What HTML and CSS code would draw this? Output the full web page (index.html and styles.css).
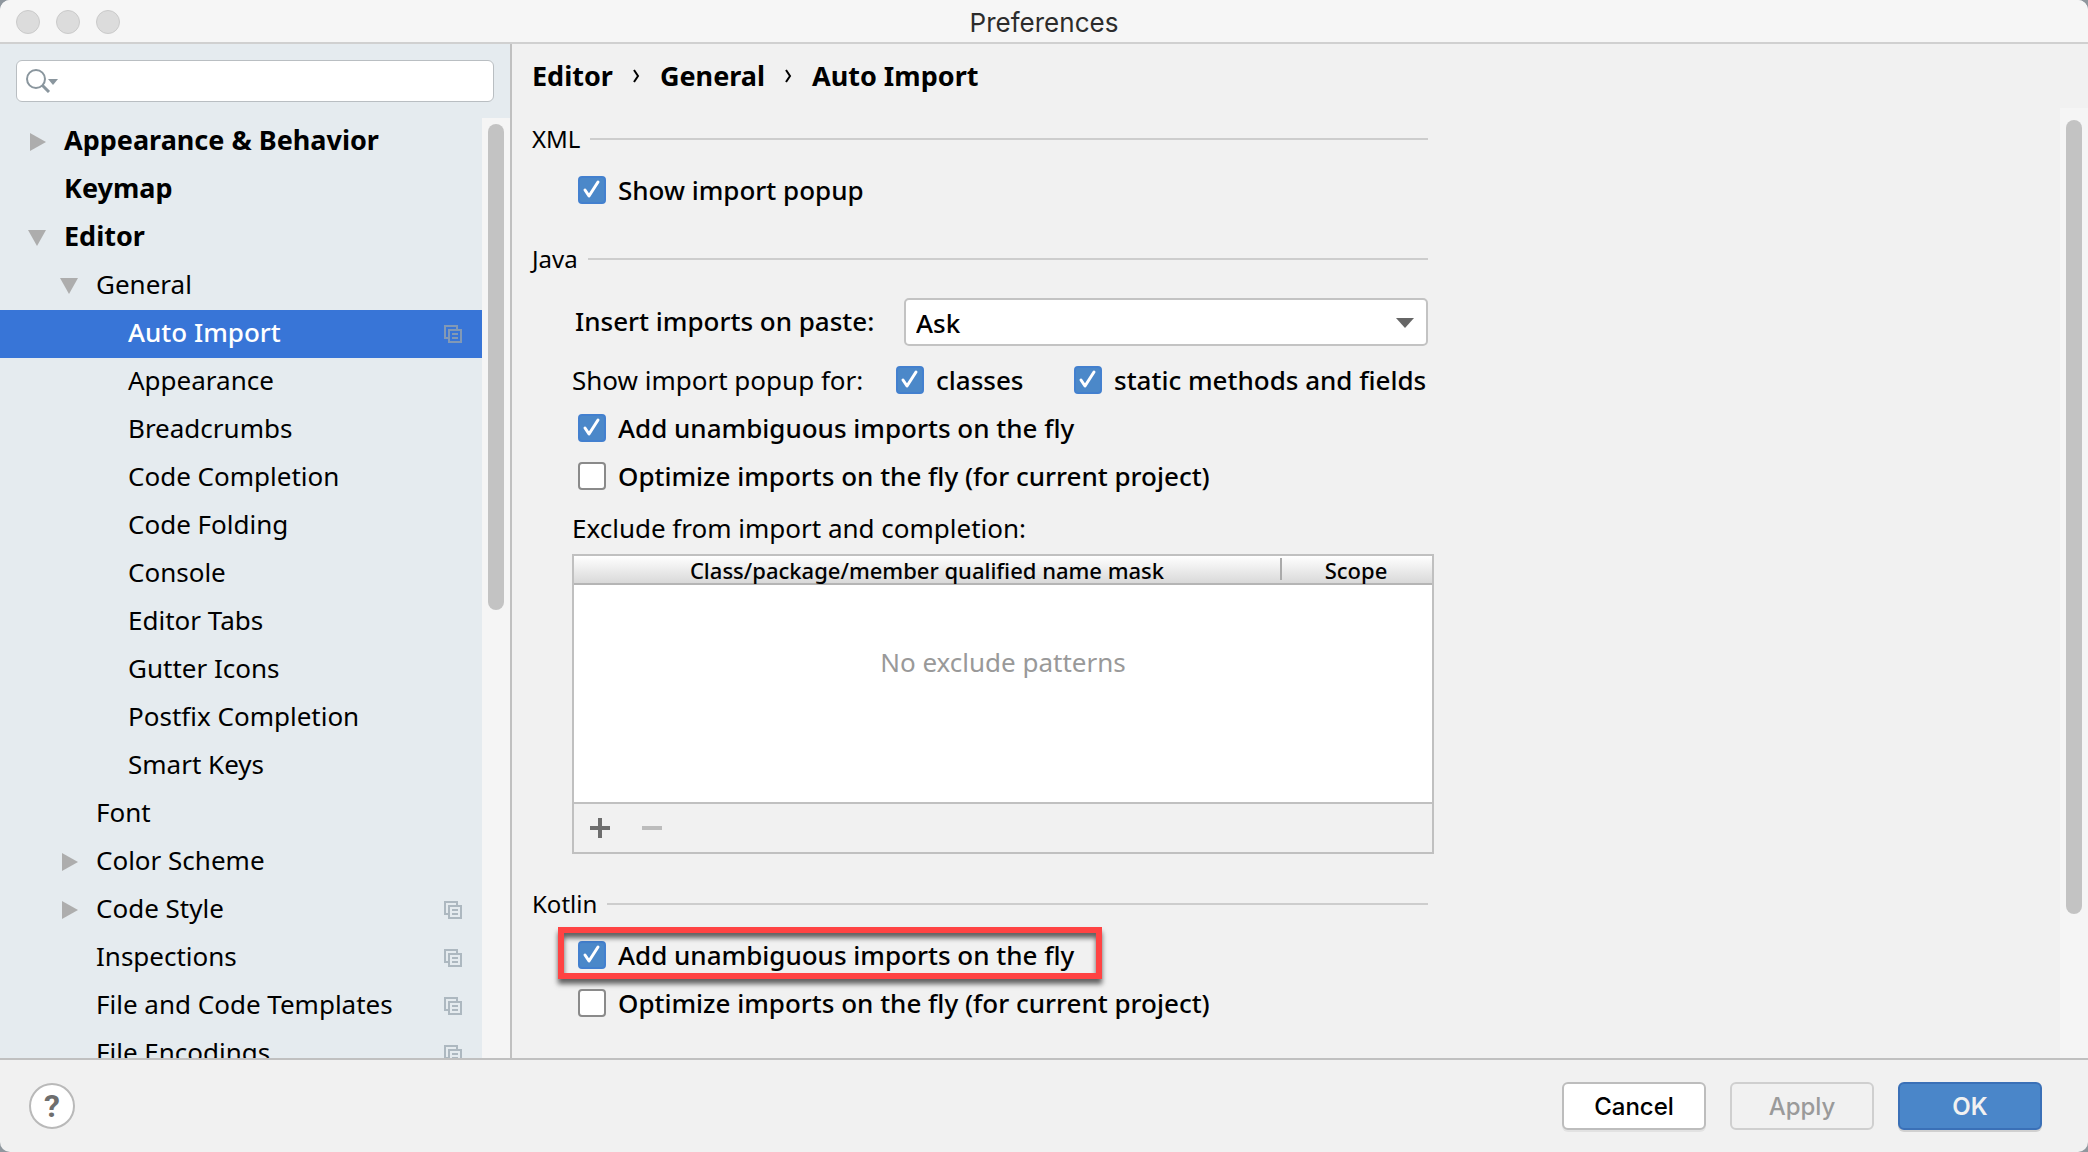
FILE: index.html
```html
<!DOCTYPE html>
<html lang="en">
<head>
<meta charset="utf-8">
<title>Preferences</title>
<link rel="stylesheet" href="styles.css">
</head>
<body>
<svg class="defs" aria-hidden="true">
  <symbol id="copy" viewBox="0 0 18 18"><path d="M13 4V1H1v12h3" /><path d="M5 5h12v12H5z" /><path d="M8 9h6M8 13h6" /></symbol>
  <symbol id="closed" viewBox="0 0 18 18"><path d="M2 0l16 9-16 9z" /></symbol>
  <symbol id="open" viewBox="0 0 18 18"><path d="M0 1h18L9 17z" /></symbol>
</svg>
<div class="window">
  <header class="titlebar">
    <div class="lights"><i></i><i></i><i></i></div>
    <h1>Preferences</h1>
  </header>

  <div class="body">
    <aside class="sidebar">
      <div class="search">
        <svg width="32" height="24" viewBox="0 0 32 24" aria-hidden="true"><circle cx="10" cy="10" r="9" fill="none" stroke="#8a969e" stroke-width="2"/><path d="M16 16l7 7" stroke="#8a969e" stroke-width="3"/><path d="M22 10h10l-5 6z" fill="#8a969e"/></svg>
        <input type="text" aria-label="Search settings">
      </div>
      <div class="scroller">
        <ul class="tree">
          <li class="top"><svg><use href="#closed"/></svg><span>Appearance &amp; Behavior</span></li>
          <li class="top leaf"><span>Keymap</span></li>
          <li class="top"><svg><use href="#open"/></svg><span>Editor</span></li>
          <li class="sub"><svg><use href="#open"/></svg><span>General</span></li>
          <li class="page leaf selected"><span>Auto Import</span><svg class="copy"><use href="#copy"/></svg></li>
          <li class="page leaf"><span>Appearance</span></li>
          <li class="page leaf"><span>Breadcrumbs</span></li>
          <li class="page leaf"><span>Code Completion</span></li>
          <li class="page leaf"><span>Code Folding</span></li>
          <li class="page leaf"><span>Console</span></li>
          <li class="page leaf"><span>Editor Tabs</span></li>
          <li class="page leaf"><span>Gutter Icons</span></li>
          <li class="page leaf"><span>Postfix Completion</span></li>
          <li class="page leaf"><span>Smart Keys</span></li>
          <li class="sub leaf"><span>Font</span></li>
          <li class="sub"><svg><use href="#closed"/></svg><span>Color Scheme</span></li>
          <li class="sub"><svg><use href="#closed"/></svg><span>Code Style</span><svg class="copy"><use href="#copy"/></svg></li>
          <li class="sub leaf"><span>Inspections</span><svg class="copy"><use href="#copy"/></svg></li>
          <li class="sub leaf"><span>File and Code Templates</span><svg class="copy"><use href="#copy"/></svg></li>
          <li class="sub leaf"><span>File Encodings</span><svg class="copy"><use href="#copy"/></svg></li>
        </ul>
        <div class="track"><div class="thumb tree-thumb"></div></div>
      </div>
    </aside>

    <main class="main">
      <nav class="crumbs" aria-label="Breadcrumb"><span>Editor</span><svg width="7" height="14" viewBox="0 0 7 14"><path d="M1 1l4 6-4 6"/></svg><span>General</span><svg width="7" height="14" viewBox="0 0 7 14"><path d="M1 1l4 6-4 6"/></svg><span>Auto Import</span></nav>
      <div class="scroller">
        <div class="form">
          <section>
            <h2>XML</h2>
            <label class="check"><input type="checkbox" checked><span>Show import popup</span></label>
          </section>

          <section>
            <h2>Java</h2>
            <div class="paste">
              <label for="paste">Insert imports on paste:</label>
              <div class="select">
                <select id="paste"><option>Ask</option><option>All</option><option>None</option></select>
                <svg width="18" height="10" viewBox="0 0 18 10" aria-hidden="true"><path d="M0 0h18L9 10z" fill="#666"/></svg>
              </div>
            </div>
            <div class="popup">
              <span>Show import popup for:</span>
              <label class="check"><input type="checkbox" checked><span>classes</span></label>
              <label class="check"><input type="checkbox" checked><span>static methods and fields</span></label>
            </div>
            <label class="check"><input type="checkbox" checked><span>Add unambiguous imports on the fly</span></label>
            <label class="check"><input type="checkbox"><span>Optimize imports on the fly (for current project)</span></label>
            <div class="exclude">
              <p>Exclude from import and completion:</p>
              <div class="panel">
                <table>
                  <thead><tr><th>Class/package/member qualified name mask</th><th class="scope">Scope</th></tr></thead>
                  <tbody><tr><td colspan="2">No exclude patterns</td></tr></tbody>
                </table>
                <div class="tools">
                  <button type="button" aria-label="Add"><svg width="20" height="20" viewBox="0 0 20 20"><path d="M10 0v20M0 10h20" stroke="#6e6e6e" stroke-width="4"/></svg></button>
                  <button type="button" aria-label="Remove" disabled><svg width="20" height="20" viewBox="0 0 20 20"><path d="M0 10h20" stroke="#bcbcbc" stroke-width="4"/></svg></button>
                </div>
              </div>
            </div>
          </section>

          <section>
            <h2>Kotlin</h2>
            <label class="check marked"><input type="checkbox" checked><span>Add unambiguous imports on the fly</span></label>
            <label class="check"><input type="checkbox"><span>Optimize imports on the fly (for current project)</span></label>
          </section>
        </div>
        <div class="track"><div class="thumb page-thumb"></div></div>
      </div>
    </main>
  </div>

  <footer class="footer">
    <button type="button" class="help" aria-label="Help">?</button>
    <button type="button" class="btn">Cancel</button>
    <button type="button" class="btn" disabled>Apply</button>
    <button type="button" class="btn primary">OK</button>
  </footer>
</div>
</body>
</html>
```
FILE: styles.css
```css
* { box-sizing: border-box; margin: 0; padding: 0; }
body { background: #8f979e; color: #000; font: 26px/48px "Noto Sans", "Open Sans", sans-serif; }
button, input, select { font: inherit; color: inherit; }
.defs { position: absolute; width: 0; height: 0; }

.window { height: 100vh; display: flex; flex-direction: column; overflow: hidden; background: #f1f1f1; border-radius: 10px; }

.titlebar { display: grid; grid-template-columns: 1fr auto 1fr; align-items: center; height: 44px; flex: none; background: #f6f6f6; border-bottom: 2px solid #d0d0d0; }
.titlebar h1 { padding-top: 4px; font: 400 26px/38px Inter, "Liberation Sans", sans-serif; color: #2c2c2c; }
.lights { display: flex; gap: 16px; padding: 2px 0 0 16px; }
.lights i { width: 24px; height: 24px; border-radius: 50%; background: #dcdcdc; border: 1px solid #cacaca; }

.body { flex: 1; min-height: 0; display: grid; grid-template-columns: 512px 1fr; }
.scroller { flex: 1; min-height: 0; display: flex; overflow: hidden; }
.track { flex: none; width: 28px; padding: 6px; background: #f5f5f5; }
.thumb { border-radius: 8px; background: #c3c3c3; }
.tree-thumb { height: 52.4%; }
.page-thumb { height: 84.7%; margin-top: 6px; }

.sidebar { display: flex; flex-direction: column; min-height: 0; background: #e5ebef; border-right: 2px solid #c0c0c0; }
.search { flex: none; display: flex; align-items: center; height: 42px; margin: 16px; padding-left: 9px; background: #fff; border: 1px solid #b9bec2; border-radius: 6px; }
.search input { flex: 1; min-width: 0; border: 0; outline: 0; background: none; }
.tree { flex: 1; list-style: none; }
.tree li { display: flex; align-items: center; gap: 18px; height: 48px; padding-right: 20px; }
.tree li > span { flex: 1; padding-bottom: 4px; line-height: 44px; white-space: nowrap; }
.tree svg { width: 18px; height: 18px; flex: none; fill: #adadad; }
.tree .copy { fill: none; stroke: #adb8c0; stroke-width: 2; }
.top { padding-left: 28px; font-size: 27px; font-weight: 700; }
.top.leaf { padding-left: 64px; }
.sub { padding-left: 60px; }
.sub.leaf { padding-left: 96px; }
.page.leaf { padding-left: 128px; }
.tree .selected { background: #3875d7; color: #fff; font-weight: 500; }
.tree .selected .copy { stroke: #8299b5; }

.main { display: flex; flex-direction: column; min-width: 0; min-height: 0; }
.crumbs { flex: none; display: flex; align-items: center; gap: 20px; height: 64px; padding: 0 20px; font-size: 27px; font-weight: 700; }
.crumbs svg { fill: none; stroke: #000; stroke-width: 2; }
.form { flex: 1; padding: 7px 20px; }
section { max-width: 896px; margin-bottom: 21px; }
h2 { display: flex; align-items: center; gap: 10px; font-size: 24px; font-weight: 400; line-height: 48px; }
h2::after { content: ""; flex: 1; height: 2px; background: #cdcdcd; }
.check { position: relative; display: flex; align-items: center; gap: 12px; width: max-content; margin-left: 46px; height: 48px; font-weight: 500; }
.check input { appearance: none; width: 28px; height: 28px; border: 2px solid #8a8a8a; border-radius: 4px; background: #fff; }
.check input:checked { border-color: #4380cf; background: #4b88c9 url("data:image/svg+xml,%3Csvg xmlns='http://www.w3.org/2000/svg' viewBox='0 0 24 24'%3E%3Cpath d='M5 12l4 6L18 4' fill='none' stroke='white' stroke-width='3' stroke-linecap='round' stroke-linejoin='round'/%3E%3C/svg%3E") center / 24px 24px no-repeat; }
h2 + .check { margin-top: 3px; }
.marked::after { content: ""; position: absolute; inset: -4px -28px 0 -20px; border: 6px solid #ff4343; box-shadow: 0 5px 5px rgba(0, 0, 0, .6), inset 0 5px 5px rgba(0, 0, 0, .6); }

.paste { display: flex; justify-content: space-between; margin: 15px 0 10px 43px; font-weight: 500; line-height: 46px; }
.select { position: relative; width: 524px; }
.select select { display: block; appearance: none; width: 100%; height: 48px; padding: 0 10px 4px; background: #fff; border: 2px solid #c3c3c3; border-radius: 5px; font-weight: 500; }
.select svg { position: absolute; right: 14px; top: 20px; pointer-events: none; }
.popup { display: grid; grid-template-columns: 324px 178px max-content; margin-left: 40px; }
.popup .check { margin-left: 0; }
.exclude { margin: 4px -6px 0 40px; padding-bottom: 5px; }
.exclude p { padding-bottom: 2px; }
.panel { border: 2px solid #c0c0c0; }
table { width: 100%; border-collapse: collapse; background: #fff; }
th { height: 28px; font-size: 22px; font-weight: 500; line-height: 26px; background: linear-gradient(#fff, #d9d9d9); border-bottom: 2px solid #b5b5b5; }
.scope { width: 152px; background: linear-gradient(#aaa, #aaa) 0 2px / 2px 22px no-repeat, linear-gradient(#fff, #d9d9d9); }
td { height: 218px; padding-bottom: 64px; text-align: center; color: #999; }
.tools { display: flex; gap: 32px; height: 50px; padding: 0 16px; align-items: center; border-top: 2px solid #c0c0c0; }
.tools button { display: flex; border: 0; background: none; }

.footer { flex: none; display: flex; align-items: center; gap: 24px; height: 94px; padding: 0 46px 0 29px; border-top: 2px solid #c0c0c0; }
.btn { width: 144px; height: 48px; padding-top: 2px; background: #fff; border: 2px solid #bdbdbd; border-radius: 6px; box-shadow: 0 2px 0 #e2e2e2; font: 500 24px/40px Inter, "Liberation Sans", sans-serif; }
.btn:disabled { background: none; border-color: #cfcfcf; box-shadow: none; color: #9a9a9a; }
.btn.primary { background: #4a86c9; border-color: #3a70b7; box-shadow: 0 2px 0 #d0d0d0; color: #f1f1f1; font-weight: 600; }
.help { width: 46px; height: 46px; margin-right: auto; border: 2px solid #b9b9b9; border-radius: 50%; background: #fff; color: #6e6e6e; font: 700 32px/40px Roboto, sans-serif; }
```
